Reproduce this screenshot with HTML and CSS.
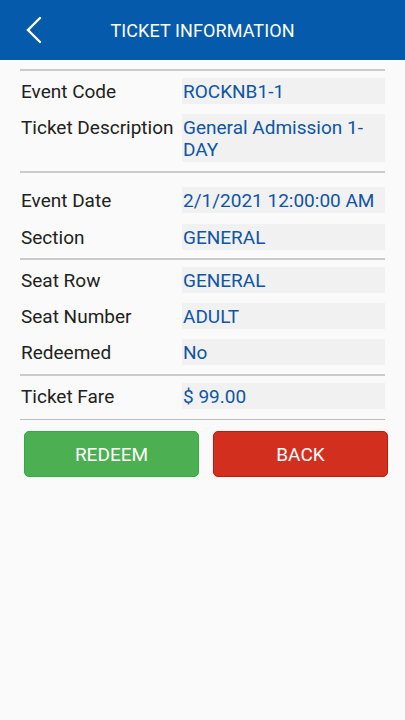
FILE: index.html
```html
<!DOCTYPE html>
<html>
<head>
<meta charset="utf-8">
<link rel="stylesheet" href="styles.css">
</head>
<body>
<header class="appbar">
  <svg class="back" width="20" height="30" viewBox="0 0 20 30"><path d="M14 2 L2 14 L14 26" fill="none" stroke="#fff" stroke-width="2.4" stroke-linecap="round" stroke-linejoin="miter"/></svg>
  <h1 class="title">TICKET INFORMATION</h1>
</header>
<main class="content">
  <div class="rule"></div>
  <section class="group g1">
    <div class="row"><span class="label">Event Code</span><span class="value">ROCKNB1-1</span></div>
    <div class="row"><span class="label">Ticket Description</span><span class="value">General Admission 1-DAY</span></div>
  </section>
  <div class="rule"></div>
  <section class="group g2">
    <div class="row"><span class="label">Event Date</span><span class="value">2/1/2021 12:00:00 AM</span></div>
    <div class="row"><span class="label">Section</span><span class="value">GENERAL</span></div>
  </section>
  <div class="rule"></div>
  <section class="group g3">
    <div class="row"><span class="label">Seat Row</span><span class="value">GENERAL</span></div>
    <div class="row"><span class="label">Seat Number</span><span class="value">ADULT</span></div>
    <div class="row"><span class="label">Redeemed</span><span class="value">No</span></div>
  </section>
  <div class="rule"></div>
  <section class="group g4">
    <div class="row"><span class="label">Ticket Fare</span><span class="value">$ 99.00</span></div>
  </section>
  <div class="rule thin"></div>
  <div class="actions">
    <button class="btn redeem">REDEEM</button>
    <button class="btn backbtn">BACK</button>
  </div>
</main>
</body>
</html>
```

FILE: styles.css
```css
* { box-sizing: border-box; }
html, body { margin: 0; padding: 0; }
body {
  width: 405px;
  height: 720px;
  background: #fafafa;
  font-family: Roboto, "Noto Sans", sans-serif;
  overflow: hidden;
}
.appbar {
  height: 60px;
  background: #055aab;
  display: flex;
  align-items: center;
  position: relative;
}
.back {
  margin-left: 26px;
  margin-top: 2px;
}
.title {
  position: absolute;
  left: 0;
  right: 0;
  text-align: center;
  margin: 0;
  color: #fff;
  font-weight: 400;
  font-size: 18px;
  letter-spacing: 0.1px;
  top: 20px;
  line-height: 22px;
}
.content {
  padding: 9px 20px 0 20px;
}
.rule {
  height: 2px;
  background: #cbcbcb;
}
.rule.thin {
  height: 1px;
  background: #bdbdbd;
}
.group {
  display: flex;
  flex-direction: column;
}
.g1 { padding: 7px 0 9px; gap: 10px; }
.g2 { padding: 14px 0 8px; gap: 11px; }
.g3 { padding: 7px 0 9px; gap: 10px; }
.g4 { padding: 7px 0 10px; }
.row {
  display: grid;
  grid-template-columns: 162px 1fr;
  align-items: start;
}
.label, .value {
  font-size: 19px;
  line-height: 22px;
  padding: 3px 0 1px;
}
.label {
  color: #212121;
  padding-left: 1px;
}
.value {
  color: #0f55a5;
  background: #f1f1f1;
  padding-left: 1px;
  padding-right: 4px;
}
.actions {
  display: flex;
  gap: 14px;
  padding: 11px 0 0 4px;
  margin-right: -3px;
}
.btn {
  flex: 1;
  height: 46px;
  border-radius: 5px;
  font-family: Roboto, "Noto Sans", sans-serif;
  font-size: 19px;
  color: #fff;
  padding: 0;
}
.redeem {
  background: #4caf52;
  border: 1px solid #2fae3c;
}
.backbtn {
  background: #d32f1e;
  border: 1px solid #c6170c;
}
```
